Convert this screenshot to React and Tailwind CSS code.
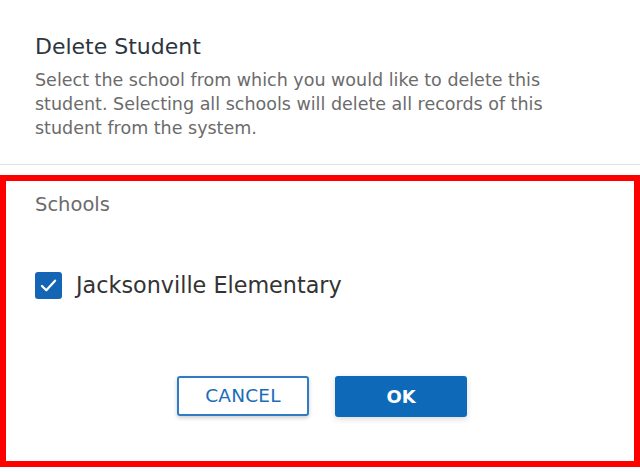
import React, { useState } from 'react';

const App = () => {
  const [checked, setChecked] = useState(true);

  return (
    <div className="w-[640px] h-[472px] bg-white flex flex-col font-['DejaVu_Sans',sans-serif]">
      {/* Header */}
      <div className="px-[35px] pt-[32px] pb-[24px] border-b border-[#e3e3e3]">
        <h2 className="text-[22px] leading-[30px] text-[#2d3540]">Delete Student</h2>
        <p className="mt-[6px] w-[560px] text-[17.5px] leading-[24px] text-[#6b6b6b]">
          Select the school from which you would like to delete this student. Selecting all schools will delete all records of this student from the system.
        </p>
      </div>

      {/* Highlighted area */}
      <div className="mt-[10px] h-[292px] border-[6px] border-[#ff0000] flex flex-col">
        <div className="pl-[29px] pt-[12px] text-[19.5px] leading-[24px] text-[#6b6b6b]">Schools</div>

        <label className="mt-[54px] ml-[29px] flex items-center gap-[14px] cursor-pointer">
          <button
            type="button"
            onClick={() => setChecked(!checked)}
            className={`w-[27px] h-[27px] rounded-[3px] flex items-center justify-center ${checked ? 'bg-[#1466b4]' : 'bg-white border-2 border-[#888]'}`}
          >
            {checked && (
              <svg className="w-[21px] h-[21px] text-white" fill="none" stroke="currentColor" viewBox="0 0 24 24">
                <path strokeLinecap="round" strokeLinejoin="round" strokeWidth="2.6" d="M4.5 12.5l5 5L19.5 6.5" />
              </svg>
            )}
          </button>
          <span className="text-[22.3px] leading-[28px] text-[#333]">Jacksonville Elementary</span>
        </label>

        <div className="mt-[77px] flex justify-center gap-[26px] pl-[4px]">
          <button className="w-[132px] h-[40px] rounded-[3px] border-2 border-[#2f7cc4] bg-white text-[#1a6cb8] text-[18.5px] tracking-[0.2px] shadow-[0_2px_4px_rgba(0,0,0,0.2)]">
            CANCEL
          </button>
          <button className="w-[132px] h-[41px] rounded-[3px] bg-[#0e6ab8] text-white text-[18px] font-bold shadow-[0_2px_6px_rgba(0,0,0,0.15)]">
            OK
          </button>
        </div>
      </div>
    </div>
  );
};

export default App;
